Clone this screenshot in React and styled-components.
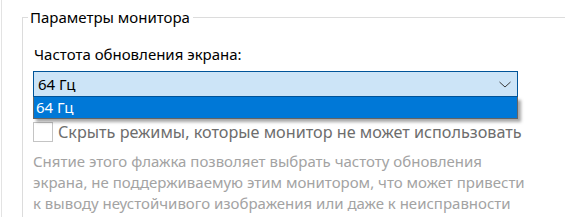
import React from "react"
import styled, { createGlobalStyle } from "styled-components"

const Global = createGlobalStyle`
  html, body {
    margin: 0;
    padding: 0;
    background: #ffffff;
  }
  body {
    font-family: "Noto Sans", "Open Sans", sans-serif;
    font-size: 15px;
    color: #000000;
  }
`

const Page = styled.div`
  height: 217px;
  overflow: hidden;
  margin-left: 1px;
  border-left: 1px solid #e3e3e3;
  padding-left: 20px;
  padding-top: 17px;
  box-sizing: border-box;
`

const GroupBox = styled.section`
  position: relative;
  border-top: 1px solid #dcdcdc;
  border-left: 1px solid #dcdcdc;
  padding: 26px 0 0 10px;
  height: 220px;
  box-sizing: border-box;
`

const Legend = styled.h2`
  position: absolute;
  top: -11px;
  left: 5px;
  margin: 0;
  padding: 0 3px 0 2px;
  background: #ffffff;
  font-size: 15px;
  font-weight: normal;
  line-height: 20px;
`

const FieldLabel = styled.div`
  line-height: 20px;
  margin-bottom: 7px;
  padding-left: 1px;
`

const Select = styled.div`
  position: relative;
  width: 485px;
`

const Combo = styled.div`
  display: flex;
  align-items: center;
  justify-content: space-between;
  height: 26px;
  box-sizing: border-box;
  border: 1px solid #005499;
  background: #cce4f7;
  padding: 0 6px 0 4px;
`

const Options = styled.ul`
  position: absolute;
  left: 0;
  right: 0;
  top: 26px;
  margin: 0;
  padding: 0;
  list-style: none;
  border: 1px solid #646464;
  border-top: none;
  box-shadow: 3px 3px 3px rgba(0, 0, 0, 0.35);
  z-index: 2;
`

const Option = styled.li`
  height: 21px;
  line-height: 21px;
  padding-left: 2px;
  background: ${(p) => (p.$selected ? "#0078d7" : "#ffffff")};
  color: ${(p) => (p.$selected ? "#ffffff" : "#000000")};
`

const CheckRow = styled.label`
  display: flex;
  align-items: center;
  gap: 5px;
  margin-top: 25px;
  color: #6d6d6d;
  font-size: 16.2px;
  line-height: 20px;
`

const Box = styled.span`
  width: 18px;
  height: 18px;
  border: 1px solid #c4c4c4;
  background: #ffffff;
  flex: none;
`

const Note = styled.p`
  margin: 9px 0 0;
  width: 505px;
  color: #a3a3a3;
  line-height: 21px;
`

const Chevron = () => (
  <svg width="12" height="7" viewBox="0 0 12 7">
    <path d="M0.5 1 L6 6 L11.5 1" fill="none" stroke="#3a3a3a" strokeWidth="1" />
  </svg>
)

export default function App() {
  return (
    <>
      <Global />
      <Page>
        <GroupBox>
          <Legend>Параметры монитора</Legend>
          <FieldLabel>Частота обновления экрана:</FieldLabel>
          <Select>
            <Combo>
              <span>64 Гц</span>
              <Chevron />
            </Combo>
            <Options>
              <Option $selected>64 Гц</Option>
            </Options>
          </Select>
          <CheckRow>
            <Box />
            Скрыть режимы, которые монитор не может использовать
          </CheckRow>
          <Note>
            Снятие этого флажка позволяет выбрать частоту обновления
            <br />
            экрана, не поддерживаемую этим монитором, что может привести
            <br />
            к выводу неустойчивого изображения или даже к неисправности
            <br />
            оборудования.
          </Note>
        </GroupBox>
      </Page>
    </>
  )
}
